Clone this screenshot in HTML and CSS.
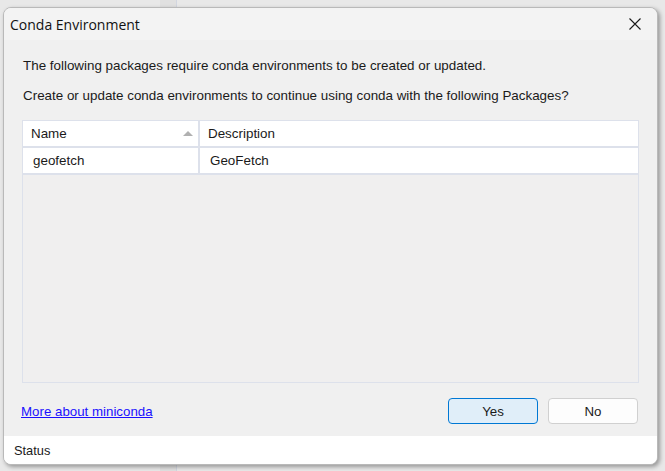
FILE: index.html
```html
<!DOCTYPE html>
<html>
<head>
<meta charset="utf-8">
<link rel="stylesheet" href="styles.css">
</head>
<body>
<div class="desktop">
  <div class="strip s1"></div>
  <div class="strip s2"></div>
  <div class="window">
    <div class="titlebar">
      <span class="title">Conda Environment</span>
      <svg class="close" width="12" height="12" viewBox="0 0 12 12"><path d="M0.5 0.5 L11.5 11.5 M11.5 0.5 L0.5 11.5" stroke="#1a1a1a" stroke-width="1.1" fill="none"/></svg>
    </div>
    <div class="body">
      <p class="msg m1">The following packages require conda environments to be created or updated.</p>
      <p class="msg m2">Create or update conda environments to continue using conda with the following Packages?</p>
      <div class="list">
        <div class="row head">
          <div class="cell c1">Name<span class="sort"></span></div>
          <div class="cell c2">Description</div>
        </div>
        <div class="row item">
          <div class="cell c1">geofetch</div>
          <div class="cell c2">GeoFetch</div>
        </div>
      </div>
      <div class="footer">
        <a class="link" href="#">More about miniconda</a>
        <div class="buttons">
          <button class="btn yes">Yes</button>
          <button class="btn no">No</button>
        </div>
      </div>
    </div>
    <div class="status">Status</div>
  </div>
</div>
</body>
</html>
```
FILE: styles.css
```css
html, body {
  margin: 0;
  padding: 0;
}
body {
  width: 665px;
  height: 471px;
  overflow: hidden;
  background: #e9e9e9;
  font-family: "Liberation Sans", Arial, sans-serif;
}
.desktop {
  position: relative;
  width: 665px;
  height: 471px;
  background: #e8e8e8;
}
.strip {
  position: absolute;
  top: 0;
  bottom: 0;
}
.s1 { left: 160px; width: 16px; background: #e0e0e0; }
.s2 { left: 176px; width: 1px; background: #d2d6e0; }
.window {
  position: absolute;
  left: 3px;
  top: 7px;
  width: 655px;
  height: 458px;
  box-sizing: border-box;
  border: 1px solid #b9b9b9;
  border-radius: 8px;
  overflow: hidden;
  display: flex;
  flex-direction: column;
  background: #f0f0f0;
  box-shadow: 2px 2px 4px rgba(0,0,0,0.35);
}
.titlebar {
  height: 32px;
  flex: none;
  background: #f3f3f3;
  display: flex;
  align-items: center;
  justify-content: space-between;
  padding: 0 16px 0 6px;
}
.title {
  font-family: "Open Sans", "Liberation Sans", sans-serif;
  font-size: 14px;
  color: #111;
}
.close { display: block; }
.body {
  flex: 1;
  display: flex;
  flex-direction: column;
  padding: 0 18px 0 16px;
  font-size: 13.4px;
  color: #1a1a1a;
}
.msg {
  margin: 0;
  line-height: 16px;
  padding-left: 3px;
}
.m1 { margin-top: 18px; }
.m2 { margin-top: 14px; }
.list {
  margin-top: 16px;
  margin-left: 2px;
  height: 263px;
  box-sizing: border-box;
  border: 1px solid #dde1eb;
  background: #f0efef;
  display: flex;
  flex-direction: column;
}
.row {
  display: flex;
  background: #fff;
  border-bottom: 2px solid #dde1eb;
  height: 25px;
  flex: none;
}
.cell {
  display: flex;
  align-items: center;
  position: relative;
}
.c1 {
  width: 177px;
  border-right: 2px solid #dde1eb;
  padding-left: 8px;
  box-sizing: border-box;
}
.c2 { padding-left: 8px; flex: 1; }
.item .c1 { padding-left: 10px; }
.item .c2 { padding-left: 10px; }
.sort {
  position: absolute;
  right: 5px;
  top: 10px;
  width: 0;
  height: 0;
  border-left: 5px solid transparent;
  border-right: 5px solid transparent;
  border-bottom: 5px solid #b0b0b0;
}
.footer {
  display: flex;
  justify-content: space-between;
  align-items: center;
  margin-top: 15px;
  margin-right: 1px;
}
.link {
  color: #1a10ff;
  text-decoration: underline;
  font-size: 13.3px;
  margin-left: 1px;
}
.buttons { display: flex; gap: 10px; }
.btn {
  width: 90px;
  height: 26px;
  border-radius: 4px;
  font-family: "Liberation Sans", Arial, sans-serif;
  font-size: 13.3px;
  color: #1a1a1a;
  padding: 0;
}
.yes {
  background: #e0eef9;
  border: 1px solid #0078d4;
}
.no {
  background: #fdfdfd;
  border: 1px solid #d0d0d0;
}
.status {
  height: 28px;
  flex: none;
  background: #fff;
  display: flex;
  align-items: center;
  padding-left: 10px;
  font-size: 12.8px;
  color: #1a1a1a;
}
```
